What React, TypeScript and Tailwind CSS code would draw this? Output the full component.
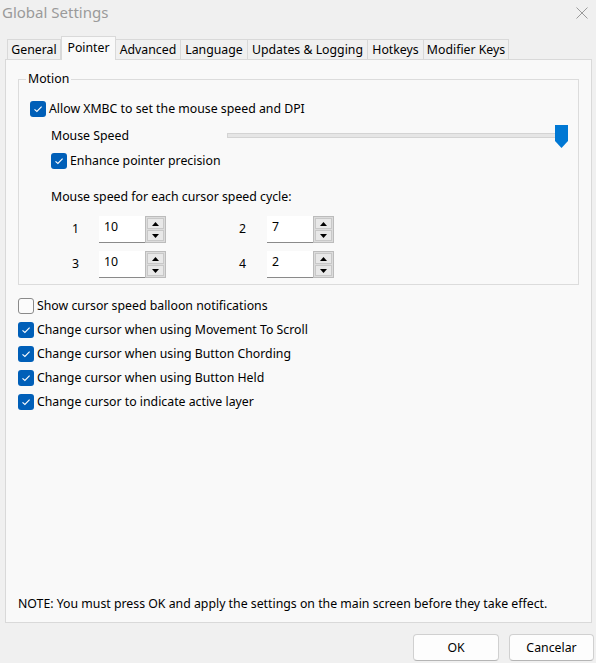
import React from "react";

const tabs = [
  { label: "General", w: "w-[54px]" },
  { label: "Pointer", w: "w-[55px]", active: true },
  { label: "Advanced", w: "w-[65px]" },
  { label: "Language", w: "w-[67px]" },
  { label: "Updates & Logging", w: "w-[120px]" },
  { label: "Hotkeys", w: "w-[56px]" },
  { label: "Modifier Keys", w: "w-[85px]" },
];

const options = [
  { label: "Show cursor speed balloon notifications", on: false },
  { label: "Change cursor when using Movement To Scroll", on: true },
  { label: "Change cursor when using Button Chording", on: true },
  { label: "Change cursor when using Button Held", on: true },
  { label: "Change cursor to indicate active layer", on: true },
];

function CheckBox({ on }: { on: boolean }) {
  if (!on) {
    return (
      <span className="h-4 w-4 shrink-0 rounded-[3px] border border-[#8a8a8a] bg-[#fbfbfb]" />
    );
  }
  return (
    <span className="flex h-4 w-4 shrink-0 items-center justify-center rounded-[3px] bg-[#005fb8]">
      <svg width="10" height="8" viewBox="0 0 10 8">
        <path d="M1.5 4.3 L3.9 6.5 L8.6 1.6" fill="none" stroke="#fff" strokeWidth="1.1" />
      </svg>
    </span>
  );
}

function Arrow({ up }: { up?: boolean }) {
  return (
    <svg width="7" height="4" viewBox="0 0 7 4">
      <path d={up ? "M0 4 L3.5 0 L7 4 Z" : "M0 0 L7 0 L3.5 4 Z"} fill="#000" />
    </svg>
  );
}

function Spin({ value }: { value: string }) {
  return (
    <div className="flex h-[27px] w-[67px]">
      <div className="flex-1 border-b border-[#8a8a8a] bg-white pl-[5px] pt-[1px] leading-[20px]">
        {value}
      </div>
      <div className="flex w-[21px] flex-col gap-px border border-[#bcbcbc] bg-[#dcdcdc] p-px">
        <div className="flex flex-1 items-center justify-center border border-[#c8c8c8] bg-[#e8e8e8]">
          <Arrow up />
        </div>
        <div className="flex flex-1 items-center justify-center border border-[#c8c8c8] bg-[#e8e8e8]">
          <Arrow />
        </div>
      </div>
    </div>
  );
}

export default function App() {
  return (
    <div className="relative h-[663px] w-[596px] overflow-hidden bg-[#f0f0f0] font-['Noto_Sans',sans-serif] text-[12.3px] text-black">
      {/* barra de título */}
      <div className="flex h-[36px] items-start justify-between">
        <span className="ml-[2px] mt-[2px] text-[15px] leading-[20px] text-[#9a9a9a]">
          Global Settings
        </span>
        <svg width="14" height="14" viewBox="0 0 14 14" className="mr-[7px] mt-[6px]">
          <path d="M1.5 1.5 L12.5 12.5 M12.5 1.5 L1.5 12.5" stroke="#9a9a9a" strokeWidth="1" />
        </svg>
      </div>

      {/* pestañas */}
      <div className="ml-[7px] flex h-[23px] items-end">
        {tabs.map((t) =>
          t.active ? (
            <div
              key={t.label}
              className={`relative z-10 -mb-px flex h-[24px] items-center justify-center border border-b-0 border-[#d9d9d9] bg-[#f9f9f9] ${t.w}`}
            >
              {t.label}
            </div>
          ) : (
            <div
              key={t.label}
              className={`flex h-[20px] items-center justify-center border border-b-0 border-l-0 border-[#d9d9d9] bg-[#f0f0f0] pt-px first:border-l ${t.w}`}
            >
              {t.label}
            </div>
          )
        )}
      </div>

      {/* panel */}
      <div className="ml-[5px] flex h-[564px] w-[587px] flex-col border border-[#d9d9d9] bg-[#f9f9f9] pl-[12px] pt-[19px]">
        <div className="relative w-[561px] border border-[#dcdcdc] pb-[6px] pl-[11px] pt-[20px]">
          <span className="absolute -top-[9px] left-[7px] bg-[#f9f9f9] px-[2px] leading-[16px]">
            Motion
          </span>

          <div className="flex h-[18px] items-center gap-[3px]">
            <CheckBox on />
            <span>Allow XMBC to set the mouse speed and DPI</span>
          </div>

          <div className="mt-[4px] flex h-[28px] items-center pl-[21px]">
            <span className="w-[178px]">Mouse Speed</span>
            <div className="relative h-[28px] w-[355px] bg-[#f9f9f9]">
              <div className="absolute left-0 top-[11px] h-[5px] w-[341px] border border-[#d4d4d4] bg-[#e6e6e6]" />
              <svg width="13" height="23" viewBox="0 0 13 23" className="absolute left-[328px] top-[3px]">
                <path d="M0 0 H13 V16 L6.5 23 L0 16 Z" fill="#0078d4" />
              </svg>
            </div>
          </div>

          <div className="mt-[2px] flex h-[18px] items-center gap-[3px] pl-[21px]">
            <CheckBox on />
            <span>Enhance pointer precision</span>
          </div>

          <div className="mt-[18px] flex h-[18px] items-center pl-[21px]">
            Mouse speed for each cursor speed cycle:
          </div>

          {[
            ["1", "10", "2", "7"],
            ["3", "10", "4", "2"],
          ].map((r, i) => (
            <div key={r[0]} className={`flex items-center pl-[33px] ${i === 0 ? "mt-[10px]" : "mt-[8px]"}`}>
              <span className="w-[25px] text-center">{r[0]}</span>
              <div className="ml-[11px]">
                <Spin value={r[1]} />
              </div>
              <span className="ml-[64px] w-[25px] text-center">{r[2]}</span>
              <div className="ml-[12px]">
                <Spin value={r[3]} />
              </div>
            </div>
          ))}
        </div>

        <div className="mt-[9px] flex flex-col">
          {options.map((o) => (
            <div key={o.label} className="flex h-[24px] items-center gap-[3px]">
              <CheckBox on={o.on} />
              <span>{o.label}</span>
            </div>
          ))}
        </div>

        <p className="mt-auto pb-[10px] leading-[16px]">
          NOTE: You must press OK and apply the settings on the main screen before they take effect.
        </p>
      </div>

      {/* botones */}
      <div className="mt-[11px] flex justify-end gap-[10px] pr-[2px]">
        <button className="h-[27px] w-[86px] rounded-[4px] border border-[#d0d0d0] border-b-[#b5b5b5] bg-[#fdfdfd] pt-px">
          OK
        </button>
        <button className="h-[27px] w-[85px] rounded-[4px] border border-[#d0d0d0] border-b-[#b5b5b5] bg-[#fdfdfd] pt-px">
          Cancelar
        </button>
      </div>
    </div>
  );
}
